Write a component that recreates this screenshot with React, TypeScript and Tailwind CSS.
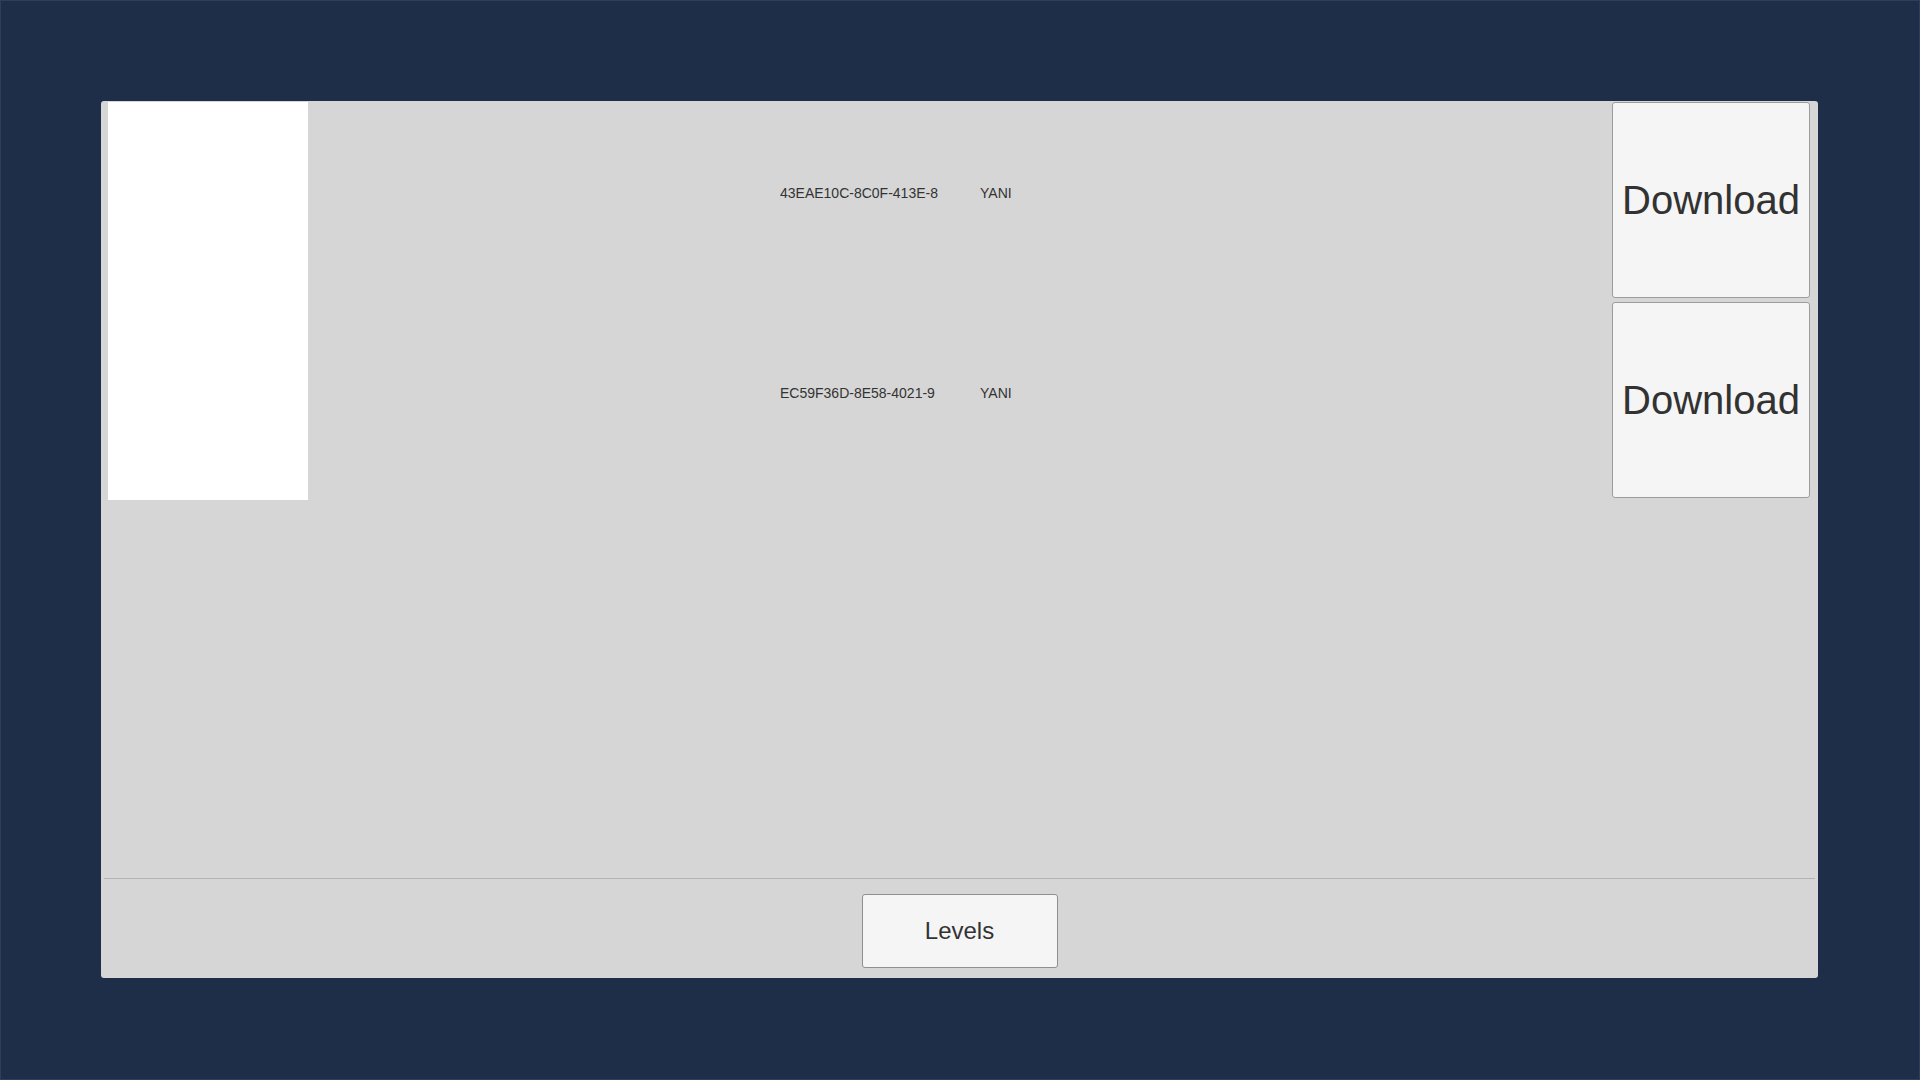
import React from 'react';

const rows = [
  { id: '43EAE10C-8C0F-413E-8', owner: 'YANI' },
  { id: 'EC59F36D-8E58-4021-9', owner: 'YANI' },
];

function DownloadButton() {
  return (
    <button className="mt-[1px] w-[198px] h-[196px] rounded-[3px] border border-[#9c9c9c] bg-[#f5f5f5] text-[40px] text-[#323232] flex items-center justify-center">
      Download
    </button>
  );
}

export default function App() {
  return (
    <div
      className="w-full h-[1080px] bg-[#1f2e48] border border-[#2c3e5e] pt-[100px] pl-[100px]"
      style={{ fontFamily: '"Liberation Sans", Arial, sans-serif' }}
    >
      <div className="w-[1717px] h-[877px] bg-[#d6d6d6] rounded-[3px] flex flex-col">
        {/* List area */}
        <div className="flex-1 flex">
          <div className="pl-[7px] pt-[1px]">
            <div className="w-[200px] h-[398px] bg-white" />
          </div>
          <div className="flex-1 flex flex-col">
            {rows.map((row) => (
              <div key={row.id} className="h-[200px] flex items-start">
                <div className="ml-[472px] h-full flex items-center pb-[16px] text-[14px] text-[#333333]">
                  <span className="w-[200px]">{row.id}</span>
                  <span>{row.owner}</span>
                </div>
                <div className="flex-1" />
                <div className="mr-[8px]">
                  <DownloadButton />
                </div>
              </div>
            ))}
          </div>
        </div>

        {/* Footer */}
        <div className="mx-[3px] border-t border-[#b4b4b4] h-[100px] flex items-center justify-center pt-[4px]">
          <button className="w-[196px] h-[74px] rounded-[3px] border border-[#8f8f8f] bg-[#f5f5f5] text-[24px] text-[#333333]">
            Levels
          </button>
        </div>
      </div>
    </div>
  );
}
